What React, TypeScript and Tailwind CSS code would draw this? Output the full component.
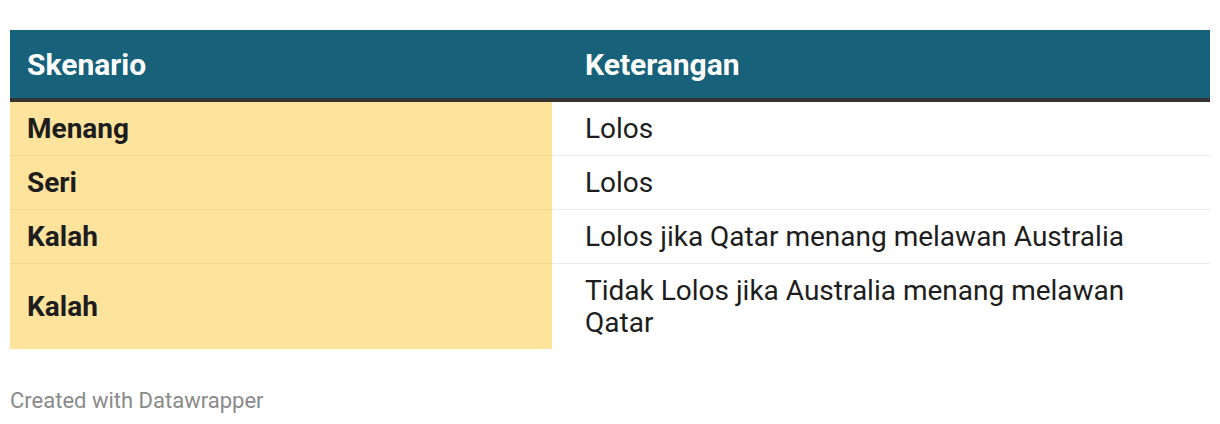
const rows: { k: string; v: string }[] = [
  { k: "Menang", v: "Lolos" },
  { k: "Seri", v: "Lolos" },
  { k: "Kalah", v: "Lolos jika Qatar menang melawan Australia" },
  { k: "Kalah", v: "Tidak Lolos jika Australia menang melawan Qatar" },
]

export default function App() {
  return (
    <div className="w-[1220px] h-[424px] bg-white px-[10px] pt-[30px] text-[#1d1d1d]" style={{ fontFamily: "Roboto, 'Liberation Sans', sans-serif" }}>
      <table className="w-[1200px] border-collapse table-fixed">
        <thead>
          <tr className="bg-[#17627a] text-white border-b-[4px] border-[#333333]">
            <th className="w-[542px] h-[70px] pl-[17px] text-left text-[30px] font-bold">Skenario</th>
            <th className="pl-[33px] text-left text-[30px] font-bold">Keterangan</th>
          </tr>
        </thead>
        <tbody className="text-[28px] leading-[32px]">
          {rows.map((r, i) => (
            <tr key={i}>
              <td className={`bg-[#fee39c] pl-[17px] pt-[11px] pb-[10px] font-bold align-middle ${i < rows.length - 1 ? "border-b border-[#f2d68e]" : ""}`}>{r.k}</td>
              <td className={`pl-[33px] pr-[80px] pt-[11px] pb-[10px] align-middle ${i < rows.length - 1 ? "border-b border-[#ececec]" : ""}`}>{r.v}</td>
            </tr>
          ))}
        </tbody>
      </table>
      <div className="mt-[35px] text-[22px] leading-[34px] text-[#8a8a8a]">Created with Datawrapper</div>
    </div>
  )
}
